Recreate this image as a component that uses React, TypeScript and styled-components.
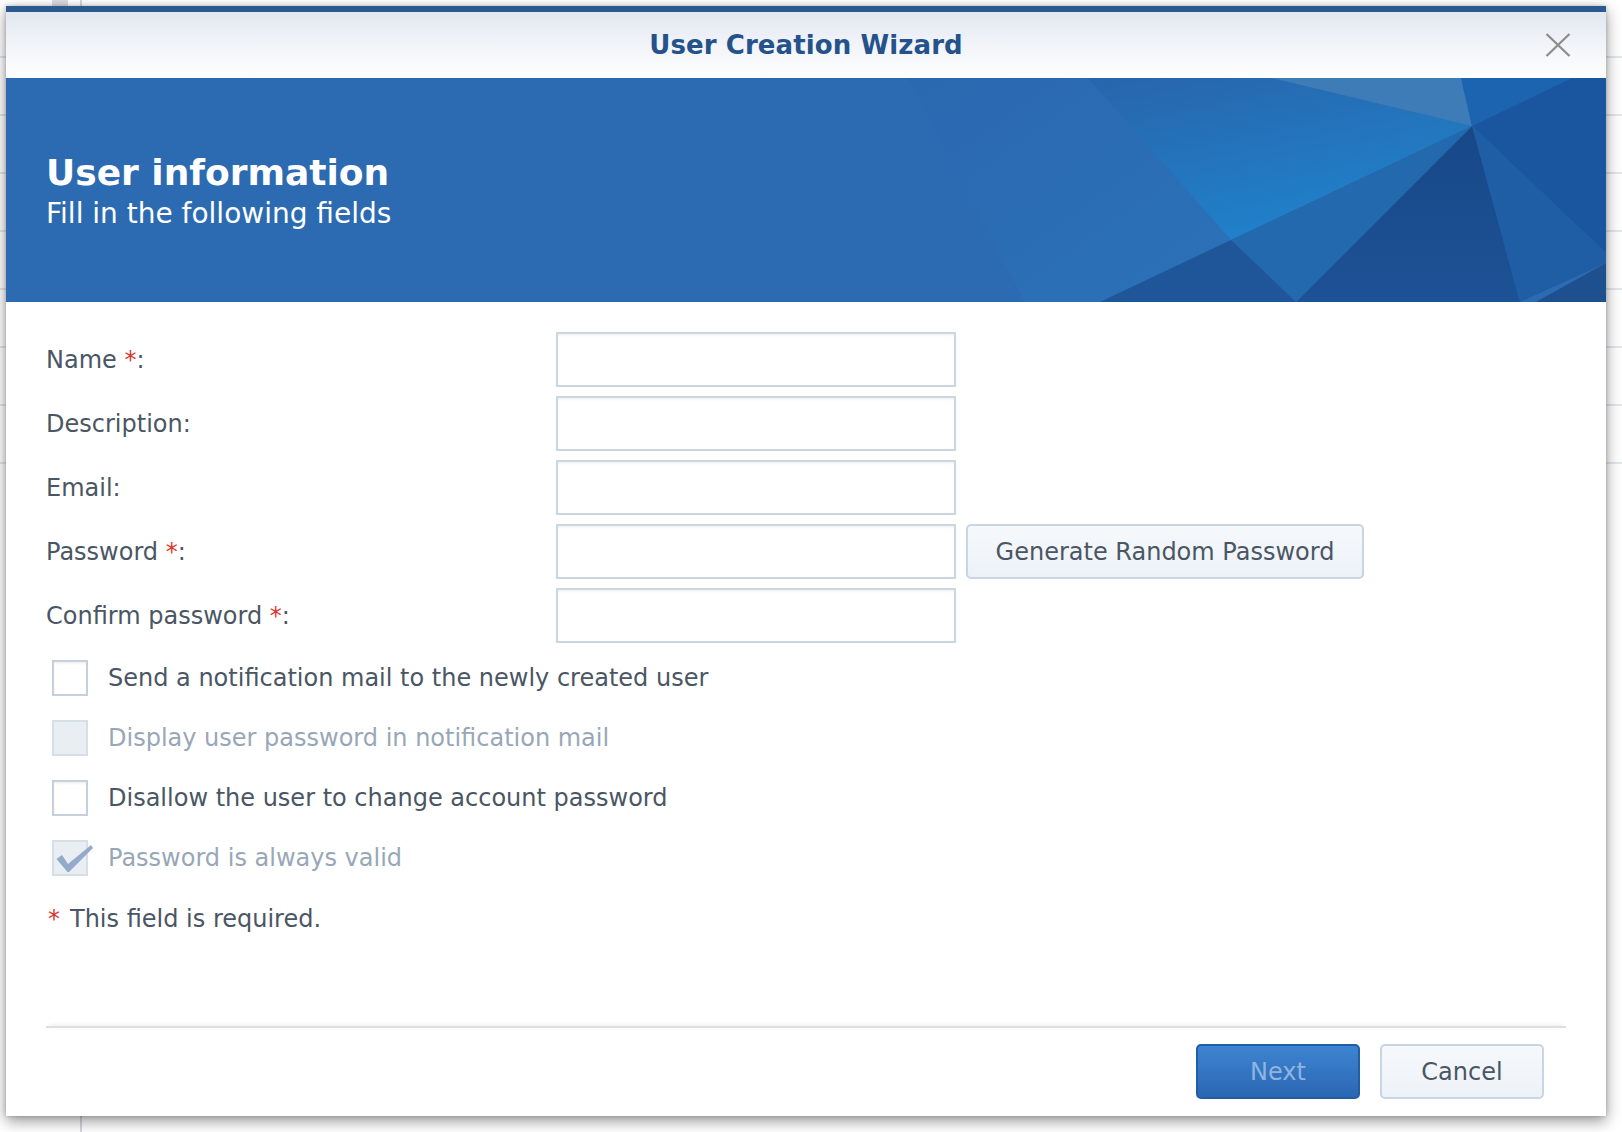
import React from "react";
import styled, { createGlobalStyle } from "styled-components";

const GlobalStyle = createGlobalStyle`
  html, body {
    margin: 0;
    padding: 0;
    background-color: #ffffff;
    background-image:
      linear-gradient(90deg, transparent 52px, #d9dcdf 52px, #d9dcdf 68px, transparent 68px),
      linear-gradient(90deg, transparent 80px, #d4d8dd 80px, #d4d8dd 82px, transparent 82px),
      repeating-linear-gradient(180deg, transparent 0, transparent 56px, #e2e7ed 56px, #e2e7ed 58px);
    background-size: 100% 8px, 100% 100%, 100% 512px;
    background-repeat: no-repeat;
    font-family: "DejaVu Sans", Verdana, sans-serif;
  }
  #root { min-height: 1132px; }
`;

const Page = styled.div`
  padding: 6px 0 0 6px;
  height: 1132px;
  box-sizing: border-box;
`;

const Dialog = styled.div`
  width: 1600px;
  height: 1110px;
  background: #ffffff;
  display: flex;
  flex-direction: column;
  box-shadow: 0 5px 14px rgba(0, 0, 0, 0.42), 0 0 4px rgba(0, 0, 0, 0.2);
`;

const Header = styled.div`
  height: 66px;
  border-top: 6px solid #2b5a8f;
  background: linear-gradient(180deg, #e2e8f1 0%, #f3f5f9 55%, #fefefe 100%);
  display: grid;
  grid-template-columns: 1fr auto 1fr;
  align-items: center;
`;

const Title = styled.div`
  grid-column: 2;
  font-size: 26px;
  font-weight: bold;
  color: #24528b;
  letter-spacing: 0.1px;
`;

const Close = styled.button`
  grid-column: 3;
  justify-self: end;
  margin-right: 34px;
  width: 28px;
  height: 28px;
  padding: 0;
  border: none;
  background: transparent;
  display: flex;
  align-items: center;
  justify-content: center;
`;

const Banner = styled.div`
  position: relative;
  height: 224px;
  background: #2c6bb2;
  overflow: hidden;
  display: flex;
  flex-direction: column;
  justify-content: center;
  padding: 4px 0 0 40px;
  box-sizing: border-box;
`;

const BannerArt = styled.svg`
  position: absolute;
  inset: 0;
  width: 100%;
  height: 100%;
`;

const BannerTitle = styled.div`
  position: relative;
  font-size: 36px;
  font-weight: bold;
  color: #ffffff;
  line-height: 44px;
`;

const BannerSub = styled.div`
  position: relative;
  font-size: 28px;
  color: #ffffff;
  line-height: 38px;
`;

const Body = styled.div`
  flex: 1;
  padding: 30px 40px 0 40px;
  display: flex;
  flex-direction: column;
`;

const FormGrid = styled.div`
  display: grid;
  grid-template-columns: 500px 400px auto;
  column-gap: 10px;
  row-gap: 9px;
  align-items: center;
`;

const Label = styled.div`
  grid-column: 1;
  font-size: 24px;
  color: #4a5664;
`;

const Star = styled.span`
  color: #d8362c;
`;

const Input = styled.input`
  grid-column: 2;
  width: 400px;
  height: 55px;
  margin: 0;
  box-sizing: border-box;
  border: 2px solid #cbd5e0;
  background: #ffffff;
  box-shadow: inset 0 2px 2px rgba(0, 0, 0, 0.04);
  outline: none;
  font-family: inherit;
  font-size: 22px;
`;

const GhostButton = styled.button`
  height: 55px;
  box-sizing: border-box;
  border: 2px solid #c9d5e2;
  border-radius: 5px;
  background: linear-gradient(180deg, #f6f9fc 0%, #edf2f8 100%);
  color: #4a5664;
  font-family: inherit;
  font-size: 24px;
  padding: 0;
`;

const GenerateButton = styled(GhostButton)`
  grid-column: 3;
  width: 398px;
`;

const Checks = styled.div`
  margin-top: 17px;
  display: flex;
  flex-direction: column;
  gap: 24px;
  padding-left: 6px;
`;

const CheckRow = styled.label`
  display: flex;
  align-items: center;
  gap: 20px;
  height: 36px;
`;

const Box = styled.span<{ $disabled?: boolean }>`
  position: relative;
  flex: none;
  width: 36px;
  height: 36px;
  box-sizing: border-box;
  border: 2px solid ${(p) => (p.$disabled ? "#d6dfe8" : "#c6d0dc")};
  background: ${(p) => (p.$disabled ? "#e9eef3" : "#ffffff")};
  box-shadow: ${(p) => (p.$disabled ? "none" : "inset 0 2px 2px rgba(0,0,0,0.05)")};
`;

const Tick = styled.svg`
  position: absolute;
  left: 2px;
  top: 3px;
  width: 38px;
  height: 30px;
  overflow: visible;
`;

const CheckText = styled.span<{ $disabled?: boolean }>`
  font-size: 24px;
  color: ${(p) => (p.$disabled ? "#98a7b7" : "#4a5664")};
`;

const Note = styled.div`
  margin-top: 29px;
  font-size: 24px;
  color: #4a5664;
  padding-left: 2px;
  display: flex;
  gap: 10px;
`;

const Footer = styled.div`
  margin: 0 40px;
  border-top: 2px solid #dedfe1;
  box-shadow: 0 -4px 5px -3px rgba(0, 0, 0, 0.08);
  padding: 16px 22px 17px 0;
  display: flex;
  justify-content: flex-end;
  gap: 20px;
`;

const PrimaryButton = styled.button`
  width: 164px;
  height: 55px;
  box-sizing: border-box;
  border: 2px solid #215ea6;
  border-radius: 5px;
  background: linear-gradient(180deg, #3e84d2 0%, #2a67b2 100%);
  color: #90b4df;
  font-family: inherit;
  font-size: 24px;
  padding: 0;
`;

const CancelButton = styled(GhostButton)`
  width: 164px;
`;

const checks = [
  { text: "Send a notification mail to the newly created user", disabled: false, checked: false },
  { text: "Display user password in notification mail", disabled: true, checked: false },
  { text: "Disallow the user to change account password", disabled: false, checked: false },
  { text: "Password is always valid", disabled: true, checked: true },
];

export default function App() {
  return (
    <>
      <GlobalStyle />
      <Page>
        <Dialog>
          <Header>
            <Title>User Creation Wizard</Title>
            <Close aria-label="Close">
              <svg width="26" height="24" viewBox="0 0 26 24">
                <path d="M1.5 1 L24.5 23 M24.5 1 L1.5 23" stroke="#8d8d8d" strokeWidth="2.3" fill="none" />
              </svg>
            </Close>
          </Header>
          <Banner>
            <BannerArt viewBox="0 0 1600 224" preserveAspectRatio="none">
              <defs>
                <linearGradient id="gB" x1="0" y1="0" x2="0.5" y2="1">
                  <stop offset="0" stopColor="#2865ac" />
                  <stop offset="1" stopColor="#1f82cb" />
                </linearGradient>
                <linearGradient id="gA" x1="0" y1="0" x2="1" y2="1">
                  <stop offset="0" stopColor="#2b68b0" />
                  <stop offset="1" stopColor="#2b72b9" />
                </linearGradient>
                <linearGradient id="gG" x1="0" y1="0" x2="0" y2="1">
                  <stop offset="0" stopColor="#174888" />
                  <stop offset="1" stopColor="#1d5296" />
                </linearGradient>
              </defs>
              <polygon points="902,0 1082,0 1225,162 1094,224 1019,224" fill="url(#gA)" />
              <polygon points="1082,0 1266,0 1466,48 1225,162" fill="url(#gB)" />
              <polygon points="1266,0 1455,0 1466,48" fill="#3e7cb7" />
              <polygon points="1455,0 1566,0 1466,48" fill="#1c64b0" />
              <polygon points="1566,0 1600,0 1600,175 1466,48" fill="#1a56a0" />
              <polygon points="1466,48 1600,175 1600,185 1514,224" fill="#1f5ea5" />
              <polygon points="1600,185 1530,224 1600,224" fill="#1e4f8e" />
              <polygon points="1466,48 1290,224 1514,224" fill="url(#gG)" />
              <polygon points="1466,48 1225,162 1290,224" fill="#2369ae" />
              <polygon points="1225,162 1094,224 1290,224" fill="#1f5699" />
            </BannerArt>
            <BannerTitle>User information</BannerTitle>
            <BannerSub>Fill in the following fields</BannerSub>
          </Banner>
          <Body>
            <FormGrid>
              <Label>
                Name <Star>*</Star>:
              </Label>
              <Input />
              <Label>Description:</Label>
              <Input />
              <Label>Email:</Label>
              <Input />
              <Label>
                Password <Star>*</Star>:
              </Label>
              <Input type="password" />
              <GenerateButton>Generate Random Password</GenerateButton>
              <Label>
                Confirm password <Star>*</Star>:
              </Label>
              <Input type="password" />
            </FormGrid>
            <Checks>
              {checks.map((c) => (
                <CheckRow key={c.text}>
                  <Box $disabled={c.disabled}>
                    {c.checked && (
                      <Tick viewBox="0 0 38 30">
                        <path d="M0.5 14 L6 10 L12 19 L35 0 L37 3 L13 27 L11.5 27 Z" fill="#93aacb" />
                      </Tick>
                    )}
                  </Box>
                  <CheckText $disabled={c.disabled}>{c.text}</CheckText>
                </CheckRow>
              ))}
            </Checks>
            <Note>
              <Star>*</Star>
              <span>This field is required.</span>
            </Note>
          </Body>
          <Footer>
            <PrimaryButton>Next</PrimaryButton>
            <CancelButton>Cancel</CancelButton>
          </Footer>
        </Dialog>
      </Page>
    </>
  );
}
